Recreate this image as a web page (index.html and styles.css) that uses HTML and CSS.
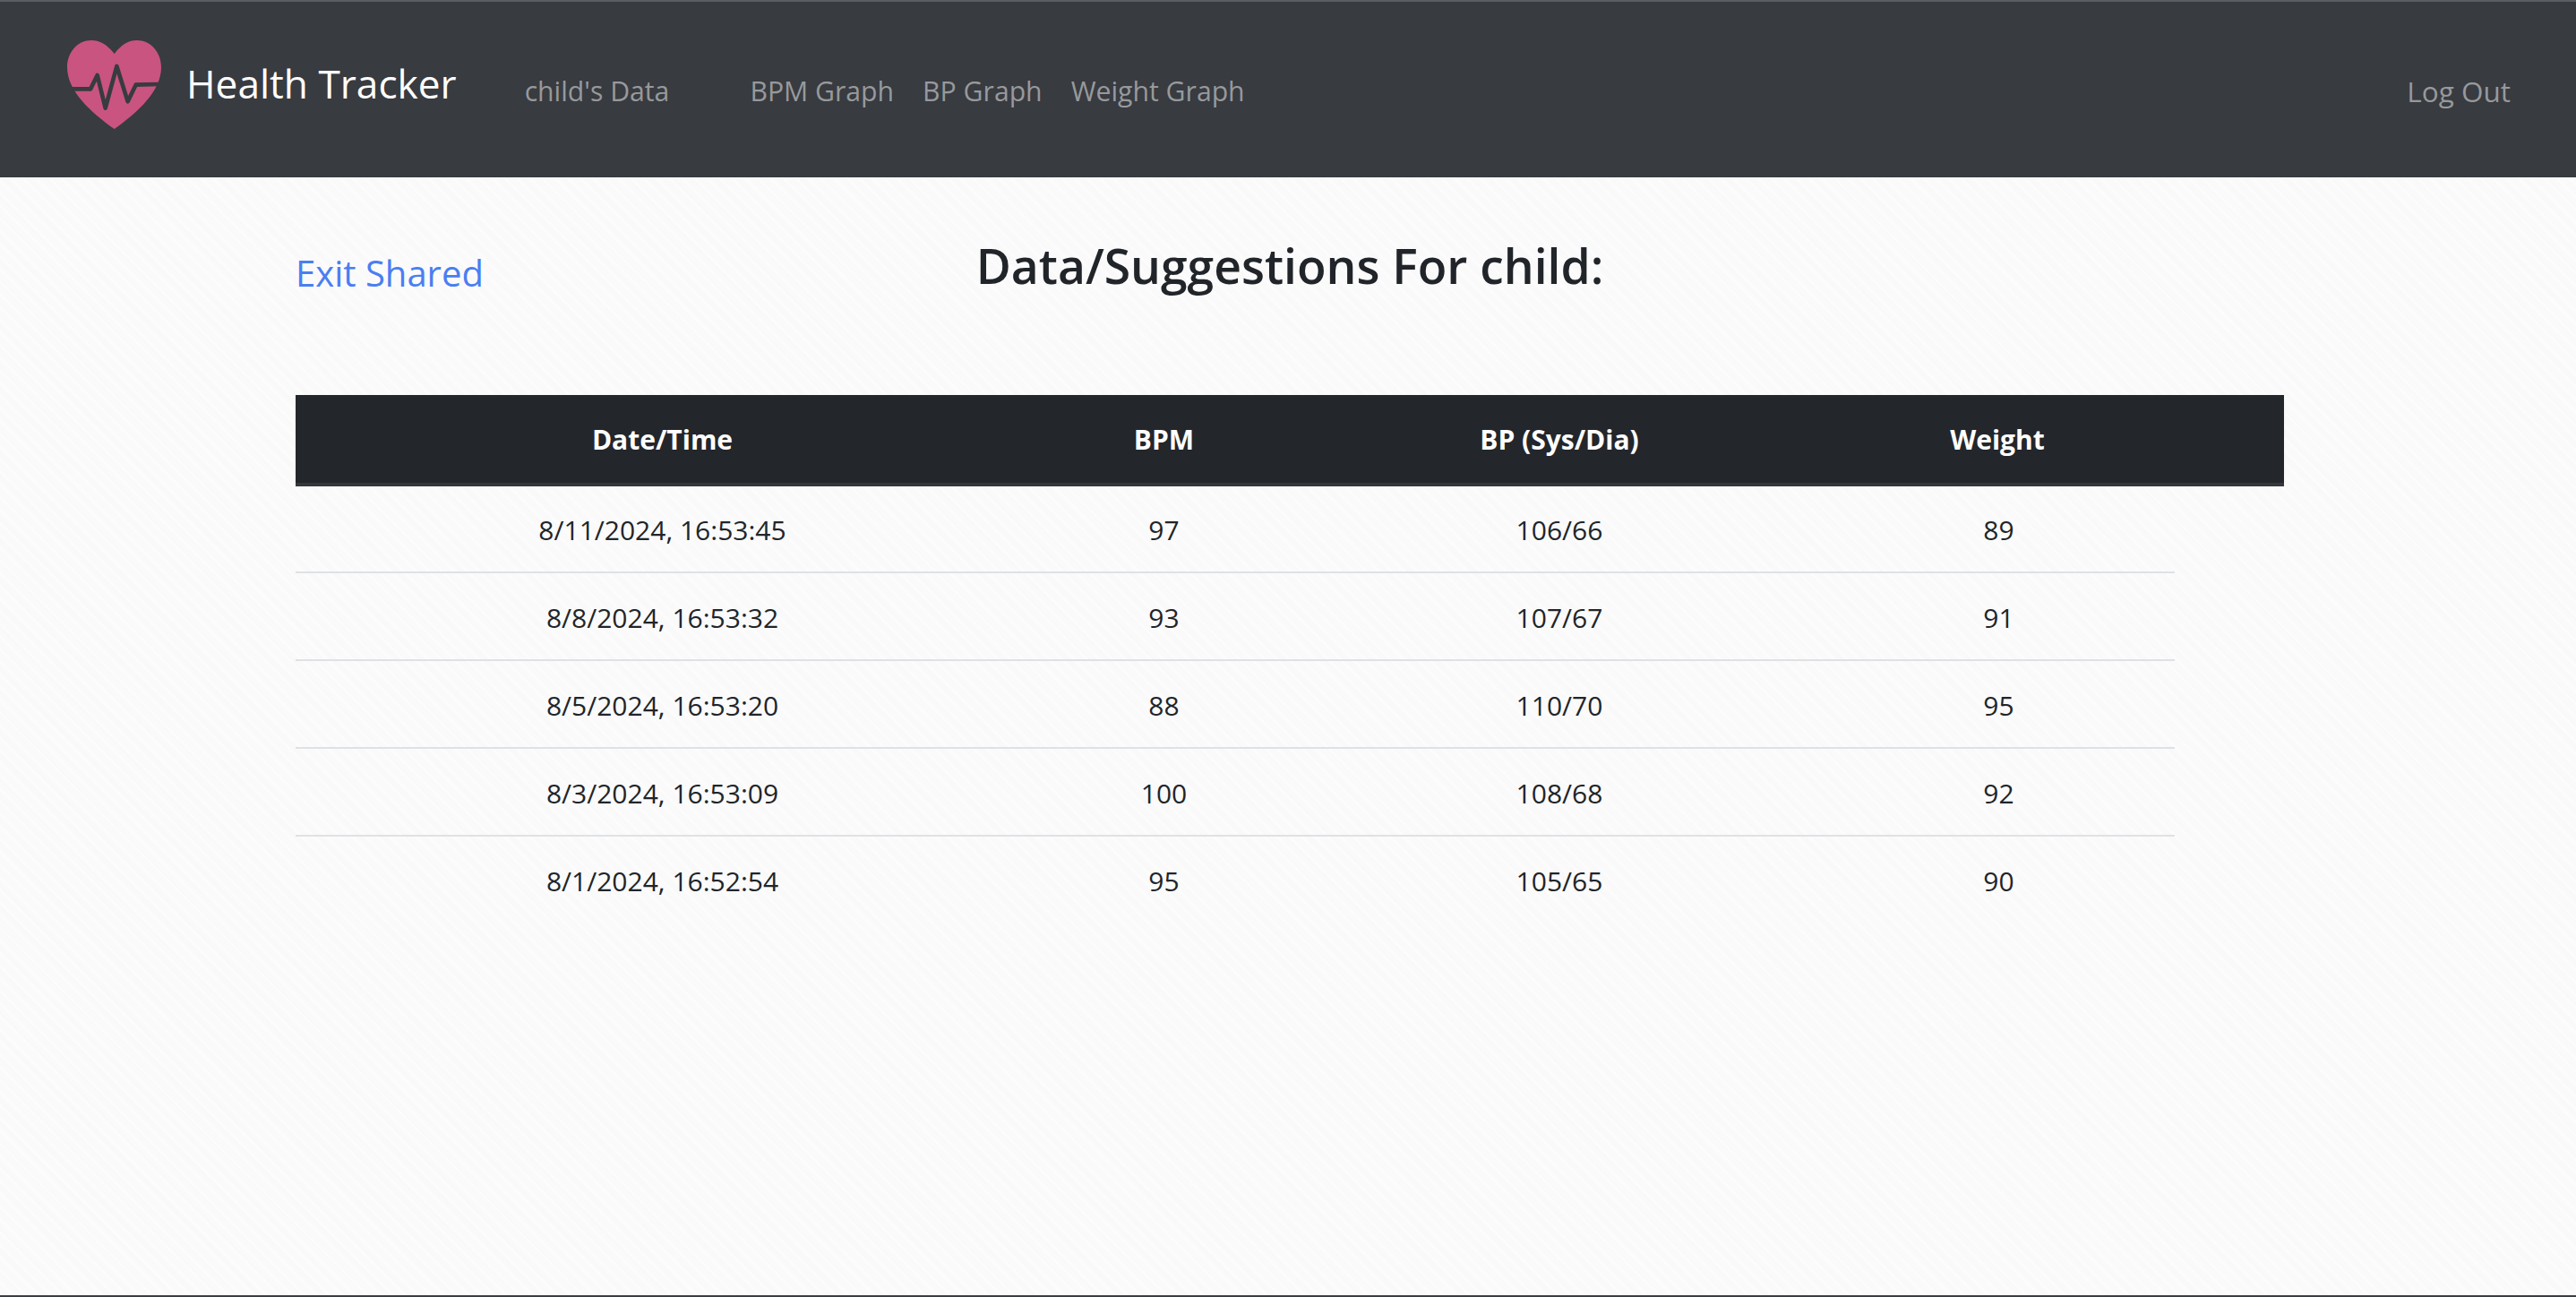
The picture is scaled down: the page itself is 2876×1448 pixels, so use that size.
FILE: index.html
```html
<!DOCTYPE html>
<html lang="en">
<head>
    <meta charset="UTF-8">
    <title>Health Tracker</title>
    <link rel="stylesheet" href="styles.css">
</head>
<body>
    <nav class="navbar">
        <a class="brand" href="#">
            <svg class="brand-logo" viewBox="47 45 315 297" aria-hidden="true">
                <path class="heart" d="M205 90 C180 58 155 45 128 45 C82 45 47 85 47 135 C47 215 125 285 205 342 C285 285 362 215 362 135 C362 85 327 45 280 45 C253 45 230 58 205 90 Z"/>
                <path class="pulse" d="M62 208 L125 208 L148 162 L175 272 L213 132 L250 250 L277 194 L352 192"/>
            </svg>
            <span>Health Tracker</span>
        </a>
        <a class="nav-link child-link" href="#">child's Data</a>
        <div class="graph-links">
            <a class="nav-link" href="#">BPM Graph</a>
            <a class="nav-link" href="#">BP Graph</a>
            <a class="nav-link" href="#">Weight Graph</a>
        </div>
        <a class="nav-link logout" href="#">Log Out</a>
    </nav>
    <main class="content">
        <div class="page-top">
            <a class="exit-link" href="#">Exit Shared</a>
            <h2 class="page-title">Data/Suggestions For child:</h2>
        </div>
        <table class="data-table">
            <thead>
                <tr>
                    <th class="col-date">Date/Time</th>
                    <th class="col-bpm">BPM</th>
                    <th class="col-bp">BP (Sys/Dia)</th>
                    <th class="col-weight">Weight</th>
                    <th class="col-extra"></th>
                </tr>
            </thead>
            <tbody>
                <tr><td>8/11/2024, 16:53:45</td><td>97</td><td>106/66</td><td>89</td></tr>
                <tr><td>8/8/2024, 16:53:32</td><td>93</td><td>107/67</td><td>91</td></tr>
                <tr><td>8/5/2024, 16:53:20</td><td>88</td><td>110/70</td><td>95</td></tr>
                <tr><td>8/3/2024, 16:53:09</td><td>100</td><td>108/68</td><td>92</td></tr>
                <tr><td>8/1/2024, 16:52:54</td><td>95</td><td>105/65</td><td>90</td></tr>
            </tbody>
        </table>
    </main>
</body>
</html>
```

FILE: styles.css
```css
* { box-sizing: border-box; }
body {
    margin: 0;
    min-height: 100vh;
    font-family: "Open Sans", "Noto Sans", Arial, sans-serif;
    color: #212529;
    background-color: #fafafa;
    background-image:
        repeating-linear-gradient(45deg, rgba(255,255,255,0.45) 0 3px, transparent 3px 10px),
        repeating-linear-gradient(45deg, rgba(0,0,0,0.005) 0 5px, transparent 5px 17px);
    border-bottom: 2px solid #3a3d42;
}
a { text-decoration: none; }

.navbar {
    display: flex;
    align-items: center;
    height: 198px;
    padding: 0 73px 0 75px;
    background-color: #383b40;
    border-top: 2px solid #5c5d60;
}
.brand {
    display: flex;
    align-items: center;
    gap: 28px;
    color: #fff;
    font-size: 44.2px;
    margin-right: 76px;
    margin-top: -11px;
}
.brand span { margin-top: -4px; }
.brand-logo { width: 105px; height: 99px; }
.heart { fill: #c95480; }
.pulse {
    fill: none;
    stroke: #383b40;
    stroke-width: 14;
    stroke-linejoin: round;
}
.nav-link {
    color: #97999c;
    font-size: 30.2px;
    margin-top: 2px;
}
.child-link { margin-right: 90px; }
.graph-links { display: flex; gap: 32px; }
.logout { margin-left: auto; font-size: 31.5px; }

.content { padding: 64px 326px 0 330px; }
.page-top {
    position: relative;
    height: 179px;
    text-align: center;
}
.exit-link {
    position: absolute;
    left: 0;
    top: 15px;
    color: #4a7ef2;
    font-size: 40px;
}
.page-title {
    margin: 0;
    font-size: 53.4px;
    font-weight: 600;
    line-height: 70px;
}
.data-table {
    width: 2220px;
    table-layout: fixed;
    border-collapse: collapse;
    text-align: center;
    font-size: 30px;
}
.data-table th {
    height: 100px;
    padding: 0;
    background-color: #23262b;
    border-bottom: 4px solid #32383e;
    color: #fff;
    font-weight: 700;
    font-size: 30px;
}
.col-date { width: 819px; }
.col-bpm { width: 301px; }
.col-bp { width: 582px; }
.col-weight { width: 396px; }
.col-extra { width: 122px; }
.data-table td {
    height: 98px;
    padding: 2px 0 0;
    border-bottom: 2px solid #dee2e6;
}
.data-table td:nth-child(4), .col-weight { padding-left: 3px; }
.data-table tr:last-child td { border-bottom: 0; }
```
